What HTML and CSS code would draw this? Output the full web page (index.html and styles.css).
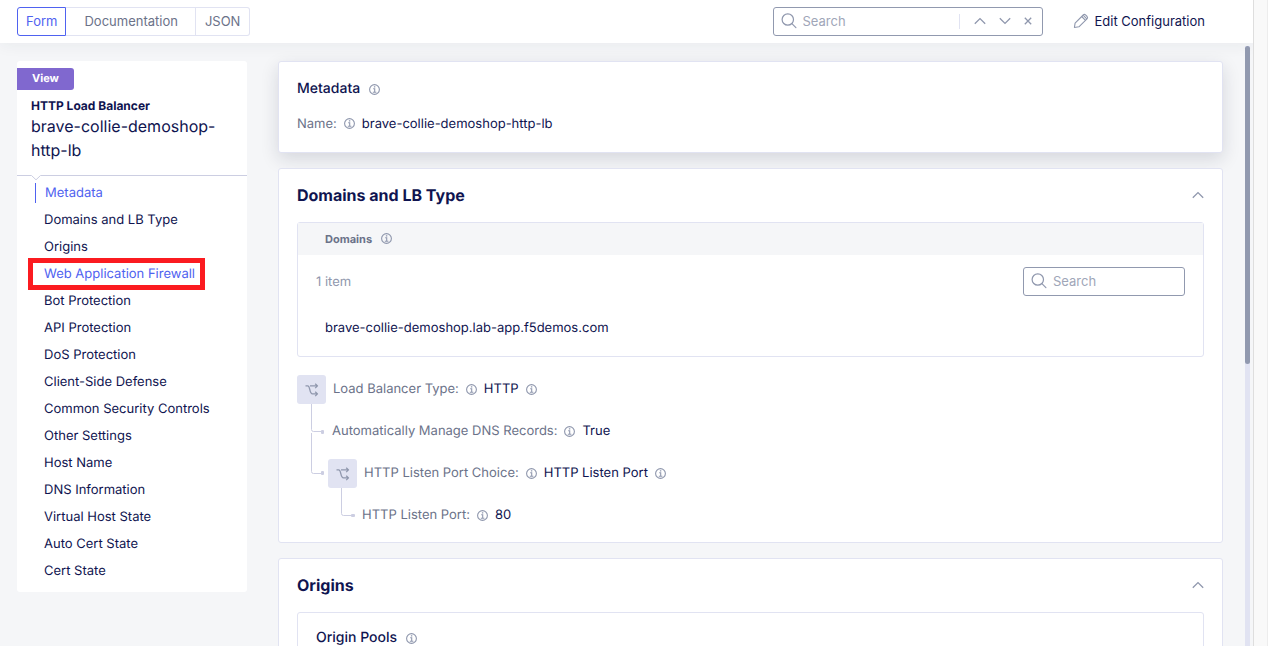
FILE: index.html
```html
<!DOCTYPE html>
<html lang="en">
<head>
<meta charset="utf-8">
<title>HTTP Load Balancer</title>
<link rel="stylesheet" href="styles.css">
</head>
<body>
<svg class="defs" aria-hidden="true">
  <symbol id="info" viewBox="0 0 11 11"><g fill="none" stroke="currentColor" stroke-width="1.1"><circle cx="5.5" cy="5.5" r="4.9"/><path d="M4.2 4.700h1.500v3.400M3.800 8.200h3.600M4.900 2.900h1.400"/></g></symbol>
  <symbol id="search" viewBox="0 0 16 16"><g fill="none" stroke="currentColor" stroke-width="1.2" stroke-linecap="round"><circle cx="6.8" cy="6.5" r="5.7"/><path d="M10.9 10.6l4 4"/></g></symbol>
  <symbol id="up" viewBox="0 0 12 8"><path d="M.8 6.8L6 1.6l5.200 5.200" fill="none" stroke="currentColor" stroke-width="1.3"/></symbol>
  <symbol id="down" viewBox="0 0 12 8"><path d="M.8 1.2L6 6.4l5.200-5.200" fill="none" stroke="currentColor" stroke-width="1.3"/></symbol>
  <symbol id="close" viewBox="0 0 8 8"><path d="M.8.8l6.400 6.400M7.200.8L.8 7.200" fill="none" stroke="currentColor" stroke-width="1.3"/></symbol>
  <symbol id="pencil" viewBox="0 0 16 16"><g fill="none" stroke="currentColor" stroke-width="1.1" stroke-linejoin="round"><path d="M1.400 14.500l.7-4.400L10.200 2q1.200-1.100 2.300-.1l1.600 1.600q1 1.100-.1 2.300L5.900 13.800z"/><path d="M8.700 3.500l3.800 3.800M10.300 2.300l3.500 3.500"/></g></symbol>
  <symbol id="branch" viewBox="0 0 14 14"><g fill="none" stroke="currentColor" stroke-width="1.3" stroke-linejoin="round"><path d="M.5 2.900h2.200c2.800 0 1.400 8 4.800 8h4.700M5 2.900h7.200M10.200.7l2.300 2.200-2.300 2.200M10.200 8.700l2.300 2.200-2.300 2.200"/></g></symbol>
</svg>

<div class="app">
  <header class="topbar">
    <div class="tabs">
      <button class="tab active" type="button">Form</button>
      <button class="tab" type="button">Documentation</button>
      <button class="tab" type="button">JSON</button>
    </div>
    <div class="search find">
      <svg class="icon-search"><use href="#search"/></svg>
      <input type="text" placeholder="Search" aria-label="Search configuration">
      <div class="find-nav">
        <button type="button" aria-label="Previous"><svg class="icon-chevron"><use href="#up"/></svg></button>
        <button type="button" aria-label="Next"><svg class="icon-chevron"><use href="#down"/></svg></button>
        <button type="button" aria-label="Clear"><svg class="icon-close"><use href="#close"/></svg></button>
      </div>
    </div>
    <button class="edit" type="button"><svg class="icon-pencil"><use href="#pencil"/></svg>Edit Configuration</button>
  </header>

  <main class="content">
    <aside class="sidebar">
      <span class="badge">View</span>
      <div class="object">
        <h1>HTTP Load Balancer</h1>
        <p>brave-collie-demoshop-http-lb</p>
      </div>
      <svg class="notch" viewBox="0 0 10 6"><path class="notch-fill" d="M0 0h10L5 5z"/><path class="notch-line" d="M.5.5L5 4.800 9.500.5"/></svg>
      <nav>
        <a class="current" href="#metadata">Metadata</a>
        <a href="#domains">Domains and LB Type</a>
        <a href="#origins">Origins</a>
        <a class="marked" href="#waf">Web Application Firewall</a>
        <a href="#bot">Bot Protection</a>
        <a href="#api">API Protection</a>
        <a href="#dos">DoS Protection</a>
        <a href="#csd">Client-Side Defense</a>
        <a href="#controls">Common Security Controls</a>
        <a href="#other">Other Settings</a>
        <a href="#host">Host Name</a>
        <a href="#dns">DNS Information</a>
        <a href="#vhost">Virtual Host State</a>
        <a href="#autocert">Auto Cert State</a>
        <a href="#cert">Cert State</a>
      </nav>
    </aside>

    <div class="cards">
      <section class="card raised" id="metadata">
        <h3>Metadata <svg class="icon-info"><use href="#info"/></svg></h3>
        <div class="field"><span class="label">Name:</span><svg class="icon-info"><use href="#info"/></svg><span>brave-collie-demoshop-http-lb</span></div>
      </section>

      <section class="card" id="domains">
        <div class="card-head"><h2>Domains and LB Type</h2><button type="button" aria-label="Collapse Domains and LB Type"><svg class="icon-chevron"><use href="#up"/></svg></button></div>
        <div class="panel">
          <div class="panel-head">Domains <svg class="icon-info"><use href="#info"/></svg></div>
          <div class="panel-tools">
            <span>1 item</span>
            <div class="search"><svg class="icon-search"><use href="#search"/></svg><input type="text" placeholder="Search" aria-label="Search domains"></div>
          </div>
          <div class="panel-row">brave-collie-demoshop.lab-app.f5demos.com</div>
        </div>
        <div class="tree">
          <div class="field"><span class="node"><svg><use href="#branch"/></svg></span><span class="label">Load Balancer Type:</span><svg class="icon-info"><use href="#info"/></svg><span>HTTP</span><svg class="icon-info"><use href="#info"/></svg></div>
          <div class="field level-1"><svg class="elbow" viewBox="0 0 14 29"><path d="M.5-13V12.500q0 2 2 2H10"/><rect x="10" y="13" width="3" height="4" rx="1"/></svg><span class="label">Automatically Manage DNS Records:</span><svg class="icon-info"><use href="#info"/></svg><span>True</span></div>
          <div class="field level-1"><svg class="elbow" viewBox="0 0 14 29"><path d="M.5-26V12.500q0 2 2 2H10"/><rect x="10" y="12" width="3" height="4" rx="1"/></svg><span class="node"><svg><use href="#branch"/></svg></span><span class="label">HTTP Listen Port Choice:</span><svg class="icon-info"><use href="#info"/></svg><span>HTTP Listen Port</span><svg class="icon-info"><use href="#info"/></svg></div>
          <div class="field level-2"><svg class="elbow" viewBox="0 0 14 29"><path d="M.5-13V12.500q0 2 2 2H10"/><rect x="10" y="13" width="4" height="3" rx="1"/></svg><span class="label">HTTP Listen Port:</span><svg class="icon-info"><use href="#info"/></svg><span>80</span></div>
        </div>
      </section>

      <section class="card" id="origins">
        <div class="card-head"><h2>Origins</h2><button type="button" aria-label="Collapse Origins"><svg class="icon-chevron"><use href="#up"/></svg></button></div>
        <div class="panel pools">
          <h3>Origin Pools <svg class="icon-info"><use href="#info"/></svg></h3>
        </div>
      </section>
    </div>
    <div class="scrollbar"><div class="thumb"></div></div>
  </main>
</div>
<div class="gutter"></div>
</body>
</html>
```
FILE: styles.css
```css
* { box-sizing: border-box; }
body {
  margin: 0;
  height: 100vh;
  overflow: hidden;
  display: flex;
  background: #f5f6f8;
  color: #0f1450;
  font: 13px/20px Inter, "Liberation Sans", sans-serif;
  text-rendering: geometricPrecision;
}
h1, h2, h3, p { margin: 0; }
button { border: 0; padding: 0; background: none; font: inherit; color: inherit; }
svg { display: block; flex: none; }
.defs { position: absolute; width: 0; height: 0; }
.app { flex: 1; min-width: 0; display: flex; flex-direction: column; }
.gutter { width: 15px; background: #f9f9f9; border-left: 1px solid #dedede; border-right: 1px solid #ededed; }

.icon-info { width: 11px; height: 11px; color: #8f97ad; }
.icon-search { width: 16px; height: 16px; color: #8f97ad; }
.icon-chevron { width: 12px; height: 8px; color: #8f97ad; }
.icon-close { width: 8px; height: 8px; color: #8f97ad; }
.icon-pencil { width: 16px; height: 16px; color: #8f97ad; }

.topbar {
  display: flex;
  align-items: center;
  height: 43px;
  padding: 0 48px 0 17px;
  background: #fff;
  box-shadow: 0 2px 16px rgba(40, 45, 60, 0.06);
}
.tabs { display: flex; margin-right: auto; }
.tab {
  height: 29px;
  padding: 0 9px 2px;
  border: 1px solid #e1e3f2;
  border-left: 0;
  color: #6b7289;
}
.tab:nth-child(2) { padding: 0 17px 2px 18px; }
.tab:last-child { border-radius: 0 3px 3px 0; }
.tab.active { padding: 0 8px 2px; border: 1px solid #4f62f0; border-radius: 3px 0 0 3px; color: #4f62f0; }

.search {
  display: flex;
  align-items: center;
  gap: 6px;
  width: 162px;
  height: 29px;
  padding: 0 7px 1px;
  border: 1px solid #9199af;
  border-radius: 3px;
  background: #fff;
}
.search input {
  flex: 1;
  min-width: 0;
  padding: 0;
  border: 0;
  outline: 0;
  background: none;
  font: inherit;
  color: #0f1450;
}
.search input::placeholder { color: #a0a6b8; opacity: 1; }
.find { width: 270px; }
.find-nav { display: flex; align-items: center; gap: 13px; height: 15px; padding: 0 3px 0 14px; border-left: 1px solid #e1e3f2; }
.edit { display: flex; align-items: center; gap: 6px; margin-left: 30px; padding-bottom: 2px; }

.content { flex: 1; min-height: 0; display: flex; align-items: flex-start; padding: 3px 3px 0 17px; }
.sidebar { flex: none; width: 230px; margin-top: 15px; padding: 7px 0; background: #fff; border-radius: 3px; }
.badge {
  display: block;
  width: 57px;
  height: 22px;
  background: #8068cf;
  border-radius: 0 3px 3px 0;
  color: #fff;
  font-size: 11px;
  font-weight: 700;
  line-height: 20px;
  text-align: center;
}
.object { padding: 7px 14px 13px; border-bottom: 1px solid #cccee2; }
.object h1 { font-size: 12px; line-height: 17px; }
.object p { font-size: 16px; line-height: 24px; }
.notch { width: 10px; height: 6px; margin: -1px 0 0 14px; }
.notch-fill { fill: #fff; }
.notch-line { fill: none; stroke: #cccee2; }
nav { display: flex; flex-direction: column; gap: 7px; padding: 2px 11px 4px; }
nav a { align-self: flex-start; padding: 0 16px; color: inherit; text-decoration: none; }
nav .current { margin-left: 7px; padding: 0 9px; border-left: 1px solid #4f62f0; color: #4f62f0; line-height: 20px; }
nav .marked { margin: -6px 0; padding: 1px 5px 1px 11px; border: 5px solid #fb1b20; color: #4f62f0; }

.cards { flex: 1; min-width: 0; display: flex; flex-direction: column; gap: 15px; margin: 15px 22px 0 31px; }
.card { padding: 0 18px 12px; background: #fff; border: 1px solid #e1e3f2; border-radius: 3px; }
.card.raised { padding: 17px 18px 18px; box-shadow: 0 6px 18px rgba(20, 25, 60, 0.14); }
h3 { display: flex; align-items: center; gap: 9px; font-size: 14px; font-weight: 500; line-height: 20px; }
.raised .field { height: 20px; margin-top: 15px; padding-bottom: 1px; }
.card-head { display: flex; align-items: center; justify-content: space-between; height: 53px; padding-bottom: 2px; }
.card-head h2 { font-size: 16px; font-weight: 700; line-height: 24px; }
.field { display: flex; align-items: center; gap: 7px; }
.label { color: #6b7289; }

.panel { border: 1px solid #e1e3f2; border-radius: 3px; }
.panel-head { display: flex; align-items: center; gap: 9px; height: 32px; padding: 0 27px 1px; background: #f5f6f8; color: #6b7289; font-size: 11px; font-weight: 700; }
.panel-tools { display: flex; align-items: center; justify-content: space-between; padding: 12px 18px 0; color: #8f97ad; }
.panel-row { padding: 22px 27px 18px; }
.pools { padding: 15px 18px; }

.tree { display: flex; flex-direction: column; gap: 13px; margin-top: 18px; }
.tree .field { height: 29px; }
.tree .field > span:not(.node) { padding-bottom: 2px; }
.node { display: grid; place-items: center; width: 29px; height: 29px; background: #e1e3f2; border-radius: 3px; color: #8f97ad; }
.node svg { width: 14px; height: 14px; }
.elbow { width: 14px; height: 29px; overflow: visible; }
.elbow path { fill: none; stroke: #cccee2; }
.elbow rect { fill: #cccee2; }
.level-1 { padding-left: 14px; }
.level-1 .node { margin-left: -4px; }
.level-2 { padding-left: 44px; }

.scrollbar { align-self: stretch; width: 5px; background: #e1e3f2; }
.thumb { height: 53%; background: #9199af; border-radius: 3px; }
```
